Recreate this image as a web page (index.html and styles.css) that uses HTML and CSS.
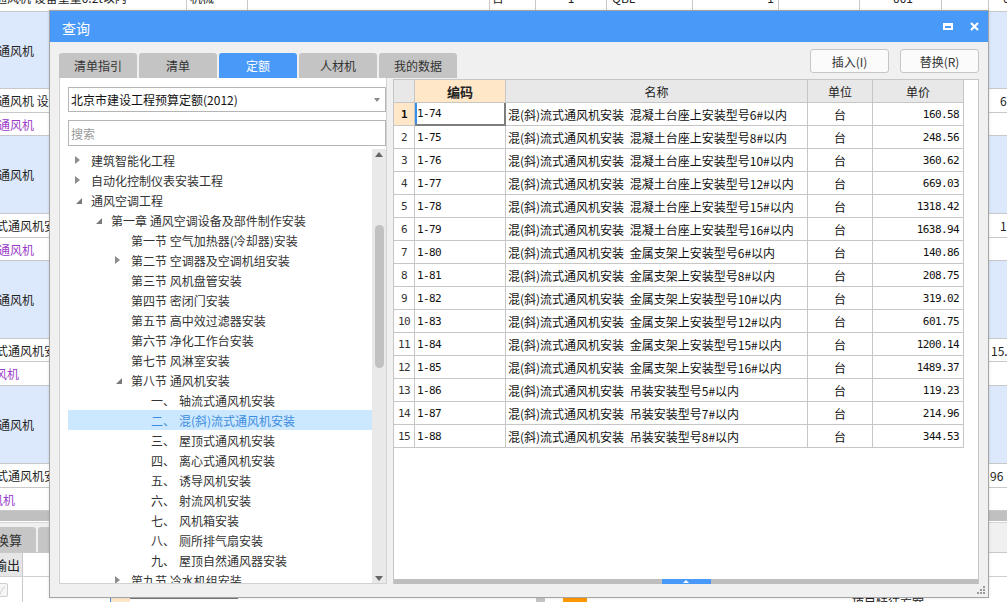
FILE: index.html
```html
<!DOCTYPE html>
<html lang="zh-CN">
<head>
<meta charset="utf-8">
<title>查询</title>
<link rel="stylesheet" href="styles.css">
</head>
<body>
<div class="app">
  <div class="toprow">
    <div class="tc c0">通风机 设备重量0.2t以内</div>
    <div class="tc c1">机械</div>
    <div class="tc c2"></div>
    <div class="tc c3">台</div>
    <div class="tc c4">1</div>
    <div class="tc c5">QBL</div>
    <div class="tc c6">1</div>
    <div class="tc c7"></div>
    <div class="tc c8">001</div>
    <div class="tc c9"></div>
    <div class="tc c10">0</div>
  </div>

  <div class="row blue b0"><div class="lc">通风机</div><div class="mid"></div><div class="rc"></div></div>
  <div class="row w1"><div class="lc">通风机 设备</div><div class="mid"></div><div class="rc p11">6</div></div>
  <div class="row w2"><div class="lc purple">通风机</div><div class="mid"></div><div class="rc"></div></div>

  <div class="row blue"><div class="lc">通风机</div><div class="mid"></div><div class="rc"></div></div>
  <div class="row w1"><div class="lc cut">式通风机安装</div><div class="mid"></div><div class="rc p11">1</div></div>
  <div class="row w2"><div class="lc purple">通风机</div><div class="mid"></div><div class="rc"></div></div>

  <div class="row blue"><div class="lc">通风机</div><div class="mid"></div><div class="rc"></div></div>
  <div class="row w2"><div class="lc cut">式通风机安装</div><div class="mid"></div><div class="rc p2">15.</div></div>
  <div class="row w1"><div class="lc purple cut2">风机</div><div class="mid"></div><div class="rc"></div></div>

  <div class="row blue"><div class="lc">通风机</div><div class="mid"></div><div class="rc"></div></div>
  <div class="row w1"><div class="lc cut">式通风机安装</div><div class="mid"></div><div class="rc p1">96</div></div>
  <div class="row w2"><div class="lc purple cut3">风机</div><div class="mid"></div><div class="rc"></div></div>

  <div class="band"></div>
  <div class="bsep"></div>
  <div class="btabs"><div class="btab bt1">换算</div><div class="btab bt2"></div></div>
  <div class="bhead"><div class="bh1">输出</div><div class="bh2"></div></div>
  <div class="brow">
    <div class="bcell"><span class="chk">✓</span></div>
    <div class="brest">
      <div class="strip">
        <span class="s-peach"></span><span class="s-dark"></span><span class="s-g"></span><span class="s-or"></span><span class="s-tx">项目特征方案</span>
      </div>
    </div>
  </div>
</div>

<div class="dialog">
  <div class="titlebar">
    <span class="title">查询</span>
    <span class="tb-max"></span>
    <svg class="tb-close" width="9" height="9" viewBox="0 0 9 9"><path d="M1 1L8 8M8 1L1 8" stroke="#fff" stroke-width="2.2" fill="none"/></svg>
  </div>
  <div class="dhead">
    <div class="tabs">
      <div class="tab">清单指引</div>
      <div class="tab">清单</div>
      <div class="tab on">定额</div>
      <div class="tab">人材机</div>
      <div class="tab">我的数据</div>
    </div>
    <div class="btns">
      <div class="btn">插入(I)</div>
      <div class="btn">替换(R)</div>
    </div>
  </div>
  <div class="dmain">
    <div class="lp">
      <div class="dd"><span>北京市建设工程预算定额(2012)</span><span class="dd-arrow"></span></div>
      <div class="search">搜索</div>
      <div class="tree">
        <div class="tl">
          <div class="tr l0"><span class="ar c"></span>建筑智能化工程</div>
          <div class="tr l0"><span class="ar c"></span>自动化控制仪表安装工程</div>
          <div class="tr l0"><span class="ar e"></span>通风空调工程</div>
          <div class="tr l1"><span class="ar e"></span>第一章 通风空调设备及部件制作安装</div>
          <div class="tr l2"><span class="ar"></span>第一节 空气加热器(冷却器)安装</div>
          <div class="tr l2"><span class="ar c"></span>第二节 空调器及空调机组安装</div>
          <div class="tr l2"><span class="ar"></span>第三节 风机盘管安装</div>
          <div class="tr l2"><span class="ar"></span>第四节 密闭门安装</div>
          <div class="tr l2"><span class="ar"></span>第五节 高中效过滤器安装</div>
          <div class="tr l2"><span class="ar"></span>第六节 净化工作台安装</div>
          <div class="tr l2"><span class="ar"></span>第七节 风淋室安装</div>
          <div class="tr l2"><span class="ar e"></span>第八节 通风机安装</div>
          <div class="tr l3"><span class="ar"></span><span class="num">一、</span>轴流式通风机安装</div>
          <div class="tr l3 sel"><span class="ar"></span><span class="num">二、</span>混(斜)流式通风机安装</div>
          <div class="tr l3"><span class="ar"></span><span class="num">三、</span>屋顶式通风机安装</div>
          <div class="tr l3"><span class="ar"></span><span class="num">四、</span>离心式通风机安装</div>
          <div class="tr l3"><span class="ar"></span><span class="num">五、</span>诱导风机安装</div>
          <div class="tr l3"><span class="ar"></span><span class="num">六、</span>射流风机安装</div>
          <div class="tr l3"><span class="ar"></span><span class="num">七、</span>风机箱安装</div>
          <div class="tr l3"><span class="ar"></span><span class="num">八、</span>厕所排气扇安装</div>
          <div class="tr l3"><span class="ar"></span><span class="num">九、</span>屋顶自然通风器安装</div>
          <div class="tr l2"><span class="ar c"></span>第九节 冷水机组安装</div>
        </div>
        <div class="vs">
          <span class="vs-up"></span>
          <span class="vs-thumb"></span>
          <span class="vs-fill"></span>
          <span class="vs-down"></span>
        </div>
      </div>
    </div>
    <div class="rp">
      <div class="grid">
        <div class="h"></div><div class="h hsel">编码</div><div class="h">名称</div><div class="h">单位</div><div class="h">单价</div>

        <div class="rn rsel mono">1</div><div class="cd mono csel">1-74</div><div class="nm">混(斜)流式通风机安装 混凝土台座上安装型号6#以内</div><div class="un">台</div><div class="pr mono">160.58</div>
        <div class="rn mono">2</div><div class="cd mono">1-75</div><div class="nm">混(斜)流式通风机安装 混凝土台座上安装型号8#以内</div><div class="un">台</div><div class="pr mono">248.56</div>
        <div class="rn mono">3</div><div class="cd mono">1-76</div><div class="nm">混(斜)流式通风机安装 混凝土台座上安装型号10#以内</div><div class="un">台</div><div class="pr mono">360.62</div>
        <div class="rn mono">4</div><div class="cd mono">1-77</div><div class="nm">混(斜)流式通风机安装 混凝土台座上安装型号12#以内</div><div class="un">台</div><div class="pr mono">669.03</div>
        <div class="rn mono">5</div><div class="cd mono">1-78</div><div class="nm">混(斜)流式通风机安装 混凝土台座上安装型号15#以内</div><div class="un">台</div><div class="pr mono">1318.42</div>
        <div class="rn mono">6</div><div class="cd mono">1-79</div><div class="nm">混(斜)流式通风机安装 混凝土台座上安装型号16#以内</div><div class="un">台</div><div class="pr mono">1638.94</div>
        <div class="rn mono">7</div><div class="cd mono">1-80</div><div class="nm">混(斜)流式通风机安装 金属支架上安装型号6#以内</div><div class="un">台</div><div class="pr mono">140.86</div>
        <div class="rn mono">8</div><div class="cd mono">1-81</div><div class="nm">混(斜)流式通风机安装 金属支架上安装型号8#以内</div><div class="un">台</div><div class="pr mono">208.75</div>
        <div class="rn mono">9</div><div class="cd mono">1-82</div><div class="nm">混(斜)流式通风机安装 金属支架上安装型号10#以内</div><div class="un">台</div><div class="pr mono">319.02</div>
        <div class="rn mono">10</div><div class="cd mono">1-83</div><div class="nm">混(斜)流式通风机安装 金属支架上安装型号12#以内</div><div class="un">台</div><div class="pr mono">601.75</div>
        <div class="rn mono">11</div><div class="cd mono">1-84</div><div class="nm">混(斜)流式通风机安装 金属支架上安装型号15#以内</div><div class="un">台</div><div class="pr mono">1200.14</div>
        <div class="rn mono">12</div><div class="cd mono">1-85</div><div class="nm">混(斜)流式通风机安装 金属支架上安装型号16#以内</div><div class="un">台</div><div class="pr mono">1489.37</div>
        <div class="rn mono">13</div><div class="cd mono">1-86</div><div class="nm">混(斜)流式通风机安装 吊装安装型号5#以内</div><div class="un">台</div><div class="pr mono">119.23</div>
        <div class="rn mono">14</div><div class="cd mono">1-87</div><div class="nm">混(斜)流式通风机安装 吊装安装型号7#以内</div><div class="un">台</div><div class="pr mono">214.96</div>
        <div class="rn mono">15</div><div class="cd mono">1-88</div><div class="nm">混(斜)流式通风机安装 吊装安装型号8#以内</div><div class="un">台</div><div class="pr mono">344.53</div>
      </div>
      <div class="hbar"><span class="hh"><span class="hh-tri"></span></span></div>
    </div>
  </div>
  <svg class="grip" width="8" height="8" viewBox="0 0 8 8"><g fill="#9a9a9a"><rect x="6" y="0" width="2" height="2"/><rect x="3" y="3" width="2" height="2"/><rect x="6" y="3" width="2" height="2"/><rect x="0" y="6" width="2" height="2"/><rect x="3" y="6" width="2" height="2"/><rect x="6" y="6" width="2" height="2"/></g></svg>
</div>
</body>
</html>
```

FILE: styles.css
```css
*{box-sizing:border-box;margin:0;padding:0}
html,body{width:1007px;height:602px}
body{overflow:hidden;position:relative;background:#fff;font-family:"Noto Sans CJK SC","Noto Sans",sans-serif;font-size:12px;color:#222}

/* background application */
.app{width:1007px;height:602px;display:flex;flex-direction:column}
.toprow{flex:none;height:12px;display:flex;border-bottom:1px solid #c8c8c8;overflow:hidden}
.tc{flex:none;border-right:1px solid #c8c8c8;line-height:0;white-space:nowrap;overflow:hidden;margin-top:-2px}
.c0{width:187px;text-indent:-5px}
.c1{width:61px;padding-left:3px}
.c2{width:242px}
.c3{width:46px;padding-left:2px}
.c4{width:71px;text-align:center}
.c5{width:86px;padding-left:5px}
.c6{width:86px;text-align:right;padding-right:4px}
.c7{width:81px}
.c8{width:82px;text-align:right;padding-right:28px}
.c9{width:47px}
.c10{width:40px;padding-left:14px;border-right:none}

.row{flex:none;display:flex;border-bottom:1px solid #c8c8c8}
.blue{background:#dce8fb;height:78px}
.b0{height:77px}
.w1{height:24px}
.w2{height:23px}
.lc{width:189px;flex:none;display:flex;align-items:center;white-space:nowrap;overflow:hidden;text-indent:-2px;border-right:1px solid #c8c8c8;font-size:12px}
.lc.cut{text-indent:-4px}
.lc.cut2{text-indent:-5px}
.lc.cut3{text-indent:-9px}
.mid{flex:1}
.rc{width:18px;flex:none;display:flex;align-items:center;white-space:nowrap;overflow:hidden}
.p11{padding-left:11px}
.p2{padding-left:2px}
.p1{padding-left:1px}
.purple{color:#9b3cc9}

.band{flex:none;height:10px;background:#c0c0c0}
.bsep{flex:none;height:2px;border-bottom:1px solid #d6d6d6}
.btabs{flex:none;height:30px;display:flex;align-items:flex-end;background:#f0f0f0;border-bottom:1px solid #c8c8c8}
.btab{height:25px;background:#c6c6c6;border-radius:3px 3px 0 0;display:flex;align-items:center;justify-content:center;font-size:13px;color:#333;white-space:nowrap}
.bt1{width:54px;margin-left:-18px}
.bt2{width:40px;margin-left:2px}
.bhead{flex:none;height:24px;display:flex;border-bottom:1px solid #d0d0d0}
.bh1{width:23px;background:#e6e6e6;border-right:1px solid #c8c8c8;display:flex;align-items:center;justify-content:flex-end;padding-right:2px;overflow:hidden;white-space:nowrap;font-size:13px}
.bh2{flex:1}
.brow{flex:1;display:flex}
.bcell{width:23px;border-right:1px solid #c8c8c8;padding-top:6px;overflow:hidden}
.chk{display:flex;width:14px;height:14px;margin-left:-6px;border:1px solid #cfcfcf;border-radius:2px;background:#f6f6f6;color:#cdcdcd;font-size:11px;align-items:center;justify-content:center}
.brest{flex:1;display:flex;flex-direction:column;justify-content:flex-end}
.strip{height:5px;display:flex;overflow:hidden}
.s-peach{margin-left:87px;width:20px;background:#ffe7c8;border-left:1px solid #3c8ee6}
.s-dark{width:108px;border-top:2px solid #7a7a7a;background:#fff}
.s-g{margin-left:298px;width:9px;background:#c4c4c4}
.s-or{margin-left:18px;width:24px;background:#ff9800}
.s-tx{margin-left:265px;line-height:12px;font-size:12px;white-space:nowrap}

/* dialog */
.dialog{position:absolute;left:49px;top:10px;width:940px;height:588px;border:1px solid #a4a4a4;background:#f0f0f0;display:flex;flex-direction:column;box-shadow:0 0 3px rgba(0,0,0,.12)}
.titlebar{flex:none;height:31px;background:#4899f8;display:flex;align-items:center;padding:0 9px 0 12px;color:#fff}
.title{flex:1;font-size:14px;padding-top:3px}
.tb-max{width:10px;height:7px;border:2px solid #fff;border-top-width:3px;margin-right:17px}
.tb-close{display:block}

.dhead{flex:none;height:36px;display:flex;justify-content:space-between;padding:0 9px}
.tabs{display:flex;gap:2px;align-self:flex-end}
.tab{width:78px;height:25px;background:#c4c4c4;border-radius:3px 3px 0 0;display:flex;align-items:center;justify-content:center;color:#333;font-size:12px}
.tab.on{background:#4899f8;color:#fff}
.btns{display:flex;gap:11px;padding-top:7px}
.btn{width:79px;height:24px;border:1px solid #c6c6c6;border-radius:3px;background:#fbfbfb;display:flex;align-items:center;justify-content:center;color:#333;font-size:12px}

.dmain{flex:1;display:flex;gap:6px;padding:0 9px 13px;min-height:0}

.lp{width:328px;flex:none;background:#fff;border:1px solid #d2d2d2;border-top:none;display:flex;flex-direction:column;padding:9px 0 0 8px}
.dd{flex:none;height:25px;border:1px solid #b5b5b5;display:flex;align-items:center;justify-content:space-between;padding-left:2px;color:#111;white-space:nowrap}
.dd-arrow{width:0;height:0;border-top:4px solid #8a8a8a;border-left:3px solid transparent;border-right:3px solid transparent;margin-right:5px}
.search{flex:none;height:26px;margin-top:8px;border:1px solid #b5b5b5;padding-left:2px;color:#9a9a9a;display:flex;align-items:center}
.tree{flex:1;display:flex;margin-top:3px;min-height:0}
.tl{flex:1;overflow:hidden;padding-top:1px}
.tr{height:20px;display:flex;align-items:center;white-space:nowrap;color:#333}
.l0{padding-left:7px}
.l1{padding-left:27px}
.l2{padding-left:47px}
.l3{padding-left:67px}
.ar{width:16px;height:20px;flex:none;display:flex;align-items:center}
.ar.c::before{content:"";width:0;height:0;border-left:5px solid #8c8c8c;border-top:4px solid transparent;border-bottom:4px solid transparent}
.ar.e::before{content:"";width:0;height:0;margin-left:1px;margin-top:1px;border-bottom:6px solid #7a7a7a;border-left:6px solid transparent}
.num{width:28px;flex:none}
.tr.sel{background:#cce8ff;color:#3d8ce0}

.vs{width:14px;flex:none;background:#e9e9e9;display:flex;flex-direction:column;align-items:center}
.vs-up{margin-top:3px;width:0;height:0;border-bottom:5px solid #666;border-left:4px solid transparent;border-right:4px solid transparent}
.vs-thumb{margin-top:68px;width:9px;height:143px;border-radius:5px;background:#c1c1c1}
.vs-fill{flex:1}
.vs-down{margin-bottom:2px;width:0;height:0;border-top:5px solid #666;border-left:4px solid transparent;border-right:4px solid transparent}

.rp{width:586px;flex:none;margin-top:1px;background:#fff;border:1px solid #c6c6c6;border-bottom:none;display:flex;flex-direction:column}
.grid{flex:1;display:grid;grid-template-columns:21px 91px 302px 65px 91px;grid-auto-rows:23px;align-content:start;min-height:0;overflow:hidden}
.grid > div{border-right:1px solid #c6c6c6;border-bottom:1px solid #c6c6c6;display:flex;align-items:center;overflow:hidden;white-space:nowrap;color:#111}
.grid > .h{background:#e8e8e8;justify-content:center;color:#222}
.grid > .hsel{background:#ffe7c8;font-weight:bold;font-size:13px}
.mono{font-family:"DejaVu Sans Mono","Liberation Mono",monospace;font-size:11px;letter-spacing:-0.6px}
.grid > .rn{justify-content:center;color:#333}
.grid > .rsel{background:#ffe7c8;font-weight:bold;color:#111}
.grid > .cd{padding-left:2px}
.grid > .csel{border-right:2px solid #7d7d7d;border-bottom:2px solid #7d7d7d;box-shadow:inset 2px 0 0 #3a8ee6}
.grid > .nm{padding-left:2px;word-spacing:3px}
.grid > .un{justify-content:center}
.grid > .pr{justify-content:flex-end;padding-right:4px}

.hbar{flex:none;height:5px;background:#bebebe;display:flex;justify-content:center}
.hh{width:49px;background:#4899f8;display:flex;justify-content:center;align-items:center}
.hh-tri{width:0;height:0;border-bottom:3px solid #fff;border-left:3px solid transparent;border-right:3px solid transparent}

.grip{position:absolute;right:3px;bottom:3px}
```
